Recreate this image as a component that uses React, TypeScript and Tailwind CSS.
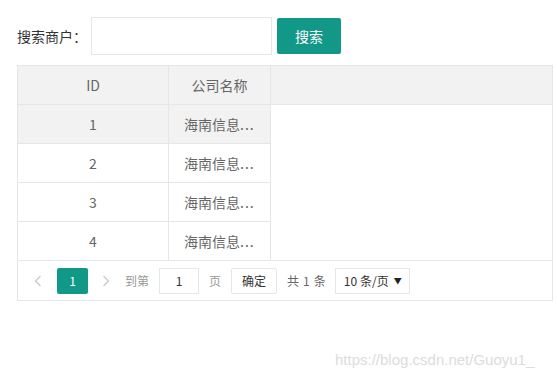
import React from 'react';

const rows = [1, 2, 3, 4];

function Chevron({ dir }: { dir: 'left' | 'right' }) {
    return (
        <svg width="8" height="12" viewBox="0 0 8 12" fill="none">
            <polyline
                points={dir === 'left' ? '6.5,1 1.5,6 6.5,11' : '1.5,1 6.5,6 1.5,11'}
                stroke="#c8c8c8"
                strokeWidth="1.2"
            />
        </svg>
    );
}

export default function App() {
    return (
        <div className="relative h-[378px] w-[557px] overflow-hidden bg-white pl-[17px] pt-[17px] font-['Noto_Sans_CJK_SC','Liberation_Sans',sans-serif]">
            {/* search bar */}
            <div className="flex h-[38px] items-start">
                <span className="w-[74px] text-[14px] leading-[38px] text-[#333]">搜索商户：</span>
                <input className="h-[38px] w-[181px] border border-[#e6e6e6] px-2 text-sm outline-none" />
                <button className="ml-[5px] mt-[1px] h-[36px] w-[64px] rounded-[2px] bg-[#119887] text-[14px] leading-[36px] text-white">
                    搜索
                </button>
            </div>

            {/* table */}
            <div className="mt-[10px] w-[536px] border border-[#e6e6e6] text-[14px] text-[#666]">
                <div className="flex h-[39px] border-b border-[#e6e6e6] bg-[#f2f2f2]">
                    <div className="w-[151px] border-r border-[#e6e6e6] text-center leading-[38px]">ID</div>
                    <div className="w-[102px] border-r border-[#e6e6e6] text-center leading-[38px]">公司名称</div>
                </div>
                {rows.map((n, i) => (
                    <div
                        key={n}
                        className={
                            'flex w-[253px] ' +
                            (i < rows.length - 1 ? 'h-[39px] border-b border-[#e6e6e6] ' : 'h-[38px] ') +
                            (i === 0 ? 'bg-[#f2f2f2]' : 'bg-white')
                        }
                    >
                        <div className="w-[151px] border-r border-[#e6e6e6] text-center leading-[38px]">{n}</div>
                        <div className="w-[102px] whitespace-nowrap border-r border-[#e6e6e6] pl-[15px] leading-[38px]">
                            海南信息<span className="tracking-[1px]">...</span>
                        </div>
                    </div>
                ))}

                {/* pagination */}
                <div className="flex h-[40px] items-start border-t border-[#e6e6e6] pl-[5px] pt-[7px] text-[12px]">
                    <div className="flex h-[26px] w-[30px] items-center justify-center">
                        <Chevron dir="left" />
                    </div>
                    <div className="ml-[4px] flex h-[26px] w-[31px] items-center justify-center rounded-[2px] bg-[#119887] text-white">
                        1
                    </div>
                    <div className="ml-[3px] flex h-[26px] w-[30px] items-center justify-center">
                        <Chevron dir="right" />
                    </div>
                    <span className="ml-[4px] leading-[26px] text-[#999]">到第</span>
                    <div className="ml-[10px] flex h-[26px] w-[40px] items-center justify-center border border-[#e6e6e6] text-[#333]">
                        1
                    </div>
                    <span className="ml-[10px] leading-[26px] text-[#999]">页</span>
                    <div className="ml-[10px] flex h-[26px] w-[46px] items-center justify-center rounded-[2px] border border-[#e6e6e6] text-[#333]">
                        确定
                    </div>
                    <span className="ml-[10px] leading-[26px] text-[#666]">
                        共<span className="mx-[4px]">1</span>条
                    </span>
                    <div className="ml-[9px] flex h-[26px] w-[75px] items-center border border-[#e6e6e6] pl-[8px] text-[#333]">
                        10<span className="ml-[3px]">条/页</span>
                        <span className="ml-auto mr-[7px] text-[8px] text-[#222]">▼</span>
                    </div>
                </div>
            </div>

            {/* watermark */}
            <div className="absolute left-[335px] top-[352px] font-['Liberation_Sans',sans-serif] text-[15px] leading-[15px] text-[#dcdcdc]">
                https://blog.csdn.net/Guoyu1_
            </div>
        </div>
    );
}
